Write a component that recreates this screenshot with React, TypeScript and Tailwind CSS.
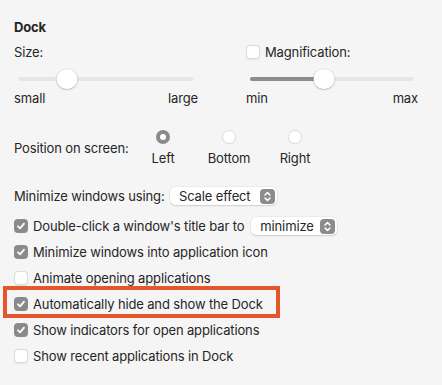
import React from 'react';

const Check = ({ checked }: { checked: boolean }) =>
  checked ? (
    <span className="flex h-[14px] w-[14px] shrink-0 items-center justify-center rounded-[4px] bg-[#8a8a8a]">
      <svg width="10" height="10" viewBox="0 0 10 10" fill="none">
        <path d="M2 5.3 L4.1 7.4 L8 2.6" stroke="white" strokeWidth="1.8" strokeLinecap="round" strokeLinejoin="round" />
      </svg>
    </span>
  ) : (
    <span className="h-[14px] w-[14px] shrink-0 rounded-[4px] border border-[#dcdcdc] bg-white shadow-[0_0.5px_1px_rgba(0,0,0,0.08)]" />
  );

const Radio = ({ selected }: { selected: boolean }) =>
  selected ? (
    <span className="flex h-[14px] w-[14px] items-center justify-center rounded-full bg-[#8a8a8a]">
      <span className="h-[6px] w-[6px] rounded-full bg-white" />
    </span>
  ) : (
    <span className="h-[14px] w-[14px] rounded-full border border-[#dedede] bg-white shadow-[0_0.5px_1px_rgba(0,0,0,0.06)]" />
  );

const Stepper = () => (
  <span className="flex h-[15px] w-[15px] items-center justify-center rounded-[4px] bg-[#8c8c8c]">
    <svg width="9" height="11" viewBox="0 0 9 11" fill="none">
      <path d="M2 4 L4.5 1.6 L7 4" stroke="white" strokeWidth="1.5" strokeLinecap="round" strokeLinejoin="round" />
      <path d="M2 7 L4.5 9.4 L7 7" stroke="white" strokeWidth="1.5" strokeLinecap="round" strokeLinejoin="round" />
    </svg>
  </span>
);

const Popup = ({ label, className }: { label: string; className: string }) => (
  <div className={`flex h-[18px] items-center justify-between rounded-[5px] bg-white pl-[9px] pr-[2px] shadow-[0_0_0_0.5px_rgba(0,0,0,0.08),0_1px_1.5px_rgba(0,0,0,0.12)] ${className}`}>
    <span>{label}</span>
    <Stepper />
  </div>
);

const Slider = ({ value, filled }: { value: number; filled: boolean }) => (
  <div className="relative h-[20px] mx-[4px]">
    <div className="absolute left-0 right-0 top-[8px] h-[4px] rounded-full bg-[#e6e6e6]" />
    {filled && (
      <div className="absolute left-0 top-[8px] h-[4px] rounded-full bg-[#8c8c8c]" style={{ width: `${value}%` }} />
    )}
    <div
      className="absolute top-0 h-[20px] w-[21px] -translate-x-1/2 rounded-full bg-white shadow-[0_0_0_0.5px_rgba(0,0,0,0.1),0_1px_2px_rgba(0,0,0,0.18)]"
      style={{ left: `${value}%` }}
    />
  </div>
);

const rows = [
  { label: 'Minimize windows into application icon', checked: true },
  { label: 'Animate opening applications', checked: false },
  { label: 'Automatically hide and show the Dock', checked: true, marked: true },
  { label: 'Show indicators for open applications', checked: true },
  { label: 'Show recent applications in Dock', checked: false },
];

export default function App() {
  return (
    <div className="h-[385px] w-[442px] overflow-hidden whitespace-nowrap bg-[#f5f5f5] pl-[14px] pt-[19px] text-[13px] leading-[16px] tracking-[-0.14px] text-[#262626] font-['Inter',sans-serif]">
      <h1 className="h-[16px] font-bold">Dock</h1>

      <div className="mt-[9px] flex">
        <div className="w-[184px]">
          <div className="h-[16px]">Size:</div>
          <div className="mt-[9px]">
            <Slider value={28} filled={false} />
          </div>
          <div className="mt-[1px] flex h-[16px] justify-between">
            <span>small</span>
            <span>large</span>
          </div>
        </div>
        <div className="ml-[48px] w-[172px]">
          <div className="flex h-[16px] items-center gap-[5px]">
            <Check checked={false} />
            <span>Magnification:</span>
          </div>
          <div className="mt-[9px]">
            <Slider value={45} filled />
          </div>
          <div className="mt-[1px] flex h-[16px] justify-between">
            <span>min</span>
            <span>max</span>
          </div>
        </div>
      </div>

      <div className="mt-[24px] flex items-center">
        <div className="w-[116px]">Position on screen:</div>
        {['Left', 'Bottom', 'Right'].map((p, i) => (
          <div key={p} className="flex w-[66px] flex-col items-center">
            <Radio selected={i === 0} />
            <span className="mt-[6px] h-[16px]">{p}</span>
          </div>
        ))}
      </div>

      <div className="mt-[20px] flex h-[20px] items-center">
        <span className="w-[156px]">Minimize windows using:</span>
        <Popup label="Scale effect" className="w-[107px]" />
      </div>

      <div className="mt-[7px] flex h-[26px] items-center gap-[5px]">
        <Check checked />
        <span>Double-click a window's title bar to</span>
        <Popup label="minimize" className="ml-[2px] w-[86px]" />
      </div>

      {rows.map((r) => (
        <div key={r.label} className="relative flex h-[26px] items-center gap-[5px]">
          <Check checked={r.checked} />
          <span>{r.label}</span>
          {r.marked && (
            <span className="absolute left-[-11px] top-[-5px] h-[32px] w-[277px] border-[4px] border-[#e5572b]" />
          )}
        </div>
      ))}
    </div>
  );
}
